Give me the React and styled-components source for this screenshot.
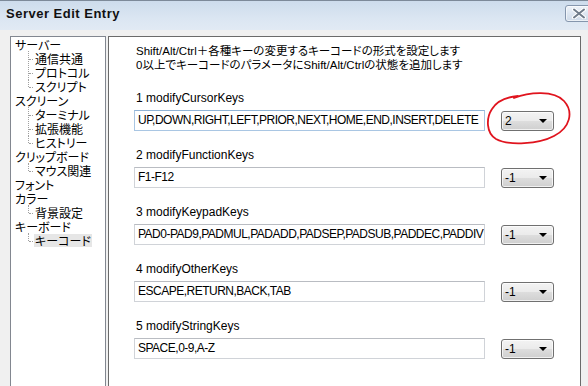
import React from "react";
import styled, { createGlobalStyle } from "styled-components";

const GlobalStyle = createGlobalStyle`
  html, body { margin: 0; padding: 0; background: #f0f0f0; overflow: hidden; }
  #root { width: 588px; height: 386px; }
`;

const Window = styled.div`
  position: relative;
  width: 588px;
  height: 386px;
  display: flex;
  flex-direction: column;
  background: #f0f0f0;
  overflow: hidden;
  font-family: "Liberation Sans", "Noto Sans CJK JP", sans-serif;
`;

const TitleBar = styled.div`
  height: 30px;
  flex: none;
  display: flex;
  align-items: flex-start;
  justify-content: space-between;
  box-sizing: border-box;
  border-top: 1px solid #7d8a99;
  background: linear-gradient(#cddcec, #dbe6f2 60%, #e1eaf4);
  padding-left: 6px;
`;

const Title = styled.div`
  font-family: "Liberation Sans", sans-serif;
  font-weight: bold;
  font-size: 13px;
  letter-spacing: 0.5px;
  line-height: 14px;
  margin-top: 6px;
  color: #111;
`;

const CloseButton = styled.div`
  width: 28px;
  height: 17px;
  margin-top: 4px;
  margin-right: -5px;
  box-sizing: border-box;
  border: 1px solid #8596ad;
  border-radius: 3px;
  background: linear-gradient(#eef3f9, #dde6f1 50%, #cfdbe9);
  box-shadow: inset 0 0 0 1px rgba(255, 255, 255, 0.6);
  display: flex;
  align-items: center;
  justify-content: center;
`;

const Body = styled.div`
  flex: 1;
  min-height: 0;
  display: flex;
  gap: 2px;
  padding: 6px 7px 0 10px;
`;

const TreePanel = styled.div`
  width: 96px;
  flex: none;
  box-sizing: border-box;
  background: #fff;
  border: 1px solid #828790;
  border-bottom: none;
  padding-top: 1px;
  font-family: "Noto Sans CJK JP", sans-serif;
  font-size: 12px;
  font-feature-settings: "palt";
`;

const TreeItem = styled.div`
  position: relative;
  height: 14px;
  line-height: 14px;
  padding-left: ${(p) => (p.$child ? 23 : 3)}px;
  white-space: nowrap;
  color: #000;

  ${(p) =>
    p.$child &&
    `
    &::before {
      content: "";
      position: absolute;
      left: 17px;
      top: -1px;
      height: ${p.$last ? 8 : 15}px;
      border-left: 1px dotted #a0a0a0;
    }
    &::after {
      content: "";
      position: absolute;
      left: 18px;
      top: 7px;
      width: 4px;
      border-top: 1px dotted #a0a0a0;
    }
  `}
`;

const ItemLabel = styled.span`
  display: inline-block;
  padding: 0 1px;
  background: ${(p) => (p.$selected ? "#e6e6e6" : "transparent")};
  line-height: 13px;
`;

const ContentPanel = styled.div`
  flex: 1;
  box-sizing: border-box;
  background: #fff;
  border: 1px solid #6a6a6a;
  border-bottom: none;
  padding: 7px 0 0 25px;
  font-size: 12px;
  color: #000;
`;

const Description = styled.div`
  margin-left: 2px;
  margin-bottom: 19px;
  line-height: 14px;
  font-size: 11.5px;
  font-feature-settings: "palt";
  white-space: nowrap;
`;

const Field = styled.div`
  margin-bottom: 17px;
`;

const FieldLabel = styled.div`
  margin-left: 2px;
  margin-bottom: 5px;
  line-height: 14px;
  font-size: 12px;
`;

const FieldRow = styled.div`
  display: flex;
  align-items: center;
  gap: 16px;
`;

const TextBox = styled.div`
  width: 351px;
  height: 21px;
  box-sizing: border-box;
  border: 1px solid ${(p) => (p.$focused ? "#a9c6e3" : "#d0d3d8")};
  border-top-color: ${(p) => (p.$focused ? "#8fb3d6" : "#b9bcc2")};
  padding: 0 3px;
  line-height: 19px;
  font-size: 12px;
  letter-spacing: -0.5px;
  white-space: nowrap;
  overflow: hidden;
  background: #fff;
`;

const Select = styled.div`
  width: 53px;
  height: 20px;
  box-sizing: border-box;
  border: 1px solid #707070;
  border-radius: 3px;
  background: linear-gradient(#f3f3f3, #ebebeb 48%, #dddddd 52%, #cfcfcf);
  box-shadow: inset 0 0 0 1px rgba(255, 255, 255, 0.7);
  display: flex;
  align-items: center;
  justify-content: space-between;
  padding: 0 6px 0 3px;
  font-size: 12px;
  line-height: 18px;
`;

const Arrow = styled.span`
  width: 0;
  height: 0;
  border-left: 4px solid transparent;
  border-right: 4px solid transparent;
  border-top: 4px solid #000;
  margin-top: 1px;
`;

const Annotation = styled.svg`
  position: absolute;
  left: 484px;
  top: 90px;
  pointer-events: none;
`;

const tree = [
  { label: "サーバー" },
  { label: "通信共通", child: true },
  { label: "プロトコル", child: true },
  { label: "スクリプト", child: true, last: true },
  { label: "スクリーン" },
  { label: "ターミナル", child: true },
  { label: "拡張機能", child: true },
  { label: "ヒストリー", child: true, last: true },
  { label: "クリップボード" },
  { label: "マウス関連", child: true, last: true },
  { label: "フォント" },
  { label: "カラー" },
  { label: "背景設定", child: true, last: true },
  { label: "キーボード" },
  { label: "キーコード", child: true, last: true, selected: true },
];

const fields = [
  { n: 1, name: "modifyCursorKeys", value: "UP,DOWN,RIGHT,LEFT,PRIOR,NEXT,HOME,END,INSERT,DELETE", sel: "2", focused: true },
  { n: 2, name: "modifyFunctionKeys", value: "F1-F12", sel: "-1" },
  { n: 3, name: "modifyKeypadKeys", value: "PAD0-PAD9,PADMUL,PADADD,PADSEP,PADSUB,PADDEC,PADDIV", sel: "-1" },
  { n: 4, name: "modifyOtherKeys", value: "ESCAPE,RETURN,BACK,TAB", sel: "-1" },
  { n: 5, name: "modifyStringKeys", value: "SPACE,0-9,A-Z", sel: "-1" },
];

export default function App() {
  return (
    <Window>
      <GlobalStyle />
      <TitleBar>
        <Title>Server Edit Entry</Title>
        <CloseButton>
          <svg width="14" height="11" viewBox="0 0 14 11">
            <path d="M2 1.5 L12 9.5 M12 1.5 L2 9.5" stroke="#ffffff" strokeWidth="4" strokeLinecap="round" />
            <path d="M2 1.5 L12 9.5 M12 1.5 L2 9.5" stroke="#6f7b8a" strokeWidth="2" strokeLinecap="round" />
          </svg>
        </CloseButton>
      </TitleBar>
      <Body>
        <TreePanel>
          {tree.map((t) => (
            <TreeItem key={t.label} $child={t.child} $last={t.last}>
              <ItemLabel $selected={t.selected}>{t.label}</ItemLabel>
            </TreeItem>
          ))}
        </TreePanel>
        <ContentPanel>
          <Description>
            Shift/Alt/Ctrl＋各種キーの変更するキーコードの形式を設定します
            <br />
            0以上でキーコードのパラメータにShift/Alt/Ctrlの状態を追加します
          </Description>
          {fields.map((f) => (
            <Field key={f.n}>
              <FieldLabel>
                {f.n} {f.name}
              </FieldLabel>
              <FieldRow>
                <TextBox $focused={f.focused}>{f.value}</TextBox>
                <Select>
                  <span>{f.sel}</span>
                  <Arrow />
                </Select>
              </FieldRow>
            </Field>
          ))}
        </ContentPanel>
      </Body>
      <Annotation width="90" height="60" viewBox="0 0 90 60">
        <path
          d="M30 8 C45 2 70 0 80 11 C90 22 86 38 70 46 C55 54 25 56 12 49 C2 43 2 28 8 19 C13 11 22 7 34 6"
          fill="none"
          stroke="#e0141e"
          strokeWidth="1.8"
          strokeLinecap="round"
        />
      </Annotation>
    </Window>
  );
}
